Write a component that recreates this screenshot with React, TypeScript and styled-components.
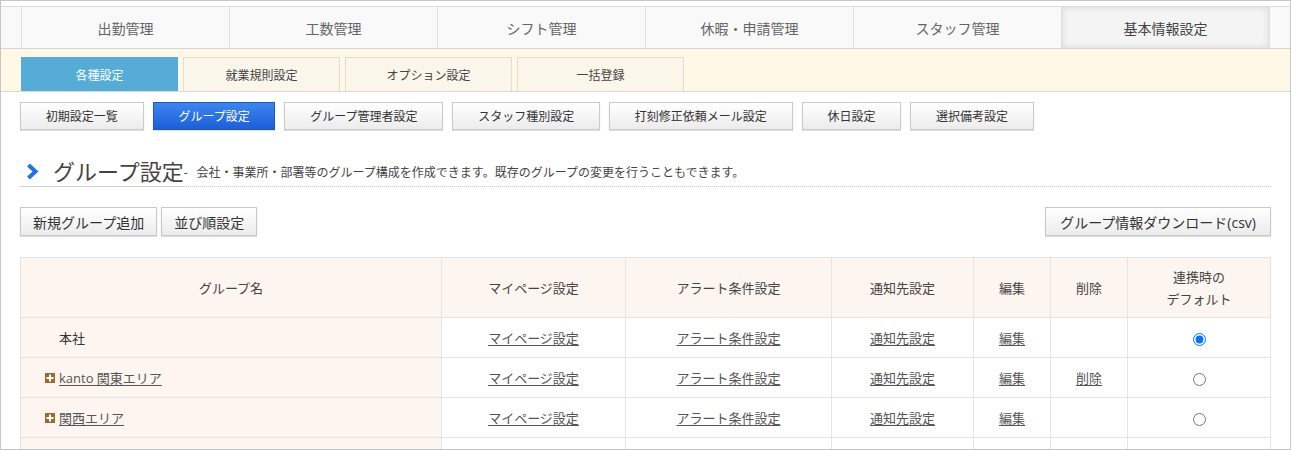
import React from 'react'
import styled, { createGlobalStyle } from 'styled-components'

const GlobalStyle = createGlobalStyle`
  html, body {
    margin: 0;
    padding: 0;
    background: #fff;
  }
  body {
    font-family: "Open Sans", "Noto Sans CJK JP", sans-serif;
    color: #444;
  }
  * {
    box-sizing: border-box;
  }
`

const Frame = styled.div`
  width: 1291px;
  height: 450px;
  border: 1px solid #c6c6c6;
  padding-top: 5px;
  overflow: hidden;
`

const GlobalNav = styled.nav`
  background: #f9f9f9;
  border-top: 1px solid #dcdcdc;
  border-bottom: 1px solid #d6d6d6;
`

const NavList = styled.ul`
  display: flex;
  width: 1249px;
  margin: 0 auto;
  padding: 0;
  list-style: none;
  border-right: 1px solid #dedede;
`

const NavItem = styled.li<{ $active?: boolean }>`
  width: 208px;
  height: 41px;
  display: flex;
  align-items: center;
  justify-content: center;
  border-left: 1px solid #dedede;
  font-size: 14px;
  color: ${(p) => (p.$active ? '#444' : '#666')};
  background: ${(p) => (p.$active ? '#f4f4f4' : 'transparent')};
  box-shadow: ${(p) => (p.$active ? 'inset 0 0 7px rgba(0,0,0,0.12)' : 'none')};
`

const SubBar = styled.div`
  height: 43px;
  background: #fef8e7;
  border-bottom: 1px solid #d8d8d8;
  display: flex;
  align-items: flex-end;
  gap: 5px;
  padding-left: 20px;
`

const SubTab = styled.div<{ $active?: boolean; $w: number }>`
  width: ${(p) => p.$w}px;
  height: 34px;
  display: flex;
  align-items: center;
  justify-content: center;
  font-size: 12px;
  color: ${(p) => (p.$active ? '#fff' : '#444')};
  background: ${(p) => (p.$active ? '#55acd6' : '#fbf6ea')};
  border: 1px solid ${(p) => (p.$active ? '#55acd6' : '#e2ddd0')};
  border-bottom: none;
`

const Content = styled.div`
  padding: 0 19px;
`

const SettingRow = styled.div`
  display: flex;
  gap: 9px;
  margin-top: 10px;
`

const SettingButton = styled.div<{ $active?: boolean }>`
  height: 28px;
  padding: 0 24.8px;
  display: flex;
  align-items: center;
  font-size: 12px;
  color: ${(p) => (p.$active ? '#fff' : '#333')};
  background: ${(p) =>
    p.$active
      ? 'linear-gradient(#3b86f0, #1c5fd8)'
      : 'linear-gradient(#ffffff, #ececec)'};
  border: 1px solid ${(p) => (p.$active ? '#1f59c0' : '#cacaca')};
  box-shadow: 0 1px 1px rgba(0, 0, 0, 0.12);
`

const Heading = styled.div`
  margin-top: 27px;
  display: flex;
  align-items: flex-end;
  border-bottom: 1px dotted #c8c8c8;
`

const TitleGroup = styled.div`
  display: flex;
  align-items: center;
  gap: 14px;
  padding: 0 0 1px 6px;
  margin-bottom: -1px;
  border-bottom: 1px solid #cfcfcf;
`

const Title = styled.h2`
  margin: 0;
  font-size: 22px;
  font-weight: 400;
  line-height: 28px;
  color: #444;
`

const Desc = styled.div`
  font-size: 12px;
  line-height: 20px;
  color: #444;
  padding-bottom: 3px;
  display: flex;
  gap: 9px;
`

const ActionRow = styled.div`
  display: flex;
  align-items: center;
  gap: 4px;
  margin-top: 20px;
`

const ActionButton = styled.div<{ $wide?: boolean }>`
  height: 29px;
  padding: 0 ${(p) => (p.$wide ? '14px' : '12px')};
  display: flex;
  align-items: center;
  font-size: 14px;
  color: #333;
  background: linear-gradient(#ffffff, #ececec);
  border: 1px solid #c8c8c8;
  box-shadow: 0 1px 1px rgba(0, 0, 0, 0.12);
`

const Spacer = styled.div`
  flex: 1;
`

const Table = styled.table`
  width: 1250px;
  margin-top: 21px;
  border-collapse: collapse;
  table-layout: fixed;
  font-size: 13px;
`

const Th = styled.th`
  height: 60px;
  background: #fdf5ef;
  border: 1px solid #e4e4e4;
  font-weight: 400;
  color: #444;
  line-height: 22px;
  text-align: center;
`

const Td = styled.td<{ $name?: boolean }>`
  height: 40px;
  border: 1px solid #e4e4e4;
  background: ${(p) => (p.$name ? '#fdf5ef' : '#fff')};
  text-align: ${(p) => (p.$name ? 'left' : 'center')};
  padding: ${(p) => (p.$name ? '0 0 0 24px' : '0')};
  color: #333;
`

const CellLink = styled.a`
  color: #555;
  text-decoration: underline;
  text-underline-offset: 2px;
`

const GroupName = styled.span<{ $indent?: boolean }>`
  display: inline-flex;
  align-items: center;
  gap: 4px;
  padding-left: ${(p) => (p.$indent ? '14px' : '0')};
`

const Radio = styled.input`
  margin: 0;
  width: 13px;
  height: 13px;
  vertical-align: middle;
`

const Chevron = () => (
  <svg width="13" height="17" viewBox="0 0 13 17">
    <polyline points="2.5,2 9.5,8.5 2.5,15" fill="none" stroke="#1e74e6" strokeWidth="4" />
  </svg>
)

const PlusBox = () => (
  <svg width="10" height="10" viewBox="0 0 10 10">
    <rect width="10" height="10" fill="#9c6a2e" />
    <rect x="4" y="1.5" width="2" height="7" fill="#fff" />
    <rect x="1.5" y="4" width="7" height="2" fill="#fff" />
  </svg>
)

const navItems = ['出勤管理', '工数管理', 'シフト管理', '休暇・申請管理', 'スタッフ管理', '基本情報設定']
const subTabs = [
  { label: '各種設定', w: 157 },
  { label: '就業規則設定', w: 157 },
  { label: 'オプション設定', w: 167 },
  { label: '一括登録', w: 167 },
]
const settings = [
  '初期設定一覧',
  'グループ設定',
  'グループ管理者設定',
  'スタッフ種別設定',
  '打刻修正依頼メール設定',
  '休日設定',
  '選択備考設定',
]

const groups = [
  { name: '本社', root: true, del: false, def: true },
  { name: 'kanto 関東エリア', root: false, del: true, def: false },
  { name: '関西エリア', root: false, del: false, def: false },
]

const App = () => {
  return (
    <Frame>
      <GlobalStyle />
      <GlobalNav>
        <NavList>
          {navItems.map((n, i) => (
            <NavItem key={n} $active={i === navItems.length - 1}>
              {n}
            </NavItem>
          ))}
        </NavList>
      </GlobalNav>
      <SubBar>
        {subTabs.map((t, i) => (
          <SubTab key={t.label} $w={t.w} $active={i === 0}>
            {t.label}
          </SubTab>
        ))}
      </SubBar>
      <Content>
        <SettingRow>
          {settings.map((s) => (
            <SettingButton key={s} $active={s === 'グループ設定'}>
              {s}
            </SettingButton>
          ))}
        </SettingRow>

        <Heading>
          <TitleGroup>
            <Chevron />
            <Title>グループ設定</Title>
          </TitleGroup>
          <Desc>
            <span>-</span>
            <span>会社・事業所・部署等のグループ構成を作成できます。既存のグループの変更を行うこともできます。</span>
          </Desc>
        </Heading>

        <ActionRow>
          <ActionButton>新規グループ追加</ActionButton>
          <ActionButton>並び順設定</ActionButton>
          <Spacer />
          <ActionButton $wide>グループ情報ダウンロード(csv)</ActionButton>
        </ActionRow>

        <Table>
          <colgroup>
            <col style={{ width: 421 }} />
            <col style={{ width: 184 }} />
            <col style={{ width: 206 }} />
            <col style={{ width: 142 }} />
            <col style={{ width: 77 }} />
            <col style={{ width: 77 }} />
            <col style={{ width: 143 }} />
          </colgroup>
          <thead>
            <tr>
              <Th>グループ名</Th>
              <Th>マイページ設定</Th>
              <Th>アラート条件設定</Th>
              <Th>通知先設定</Th>
              <Th>編集</Th>
              <Th>削除</Th>
              <Th>
                連携時の
                <br />
                デフォルト
              </Th>
            </tr>
          </thead>
          <tbody>
            {groups.map((g) => (
              <tr key={g.name}>
                <Td $name>
                  {g.root ? (
                    <GroupName $indent>{g.name}</GroupName>
                  ) : (
                    <GroupName>
                      <PlusBox />
                      <CellLink>{g.name}</CellLink>
                    </GroupName>
                  )}
                </Td>
                <Td><CellLink>マイページ設定</CellLink></Td>
                <Td><CellLink>アラート条件設定</CellLink></Td>
                <Td><CellLink>通知先設定</CellLink></Td>
                <Td><CellLink>編集</CellLink></Td>
                <Td>{g.del && <CellLink>削除</CellLink>}</Td>
                <Td>
                  <Radio type="radio" name="default" defaultChecked={g.def} />
                </Td>
              </tr>
            ))}
            <tr>
              <Td $name />
              <Td />
              <Td />
              <Td />
              <Td />
              <Td />
              <Td />
            </tr>
          </tbody>
        </Table>
      </Content>
    </Frame>
  )
}

export default App
